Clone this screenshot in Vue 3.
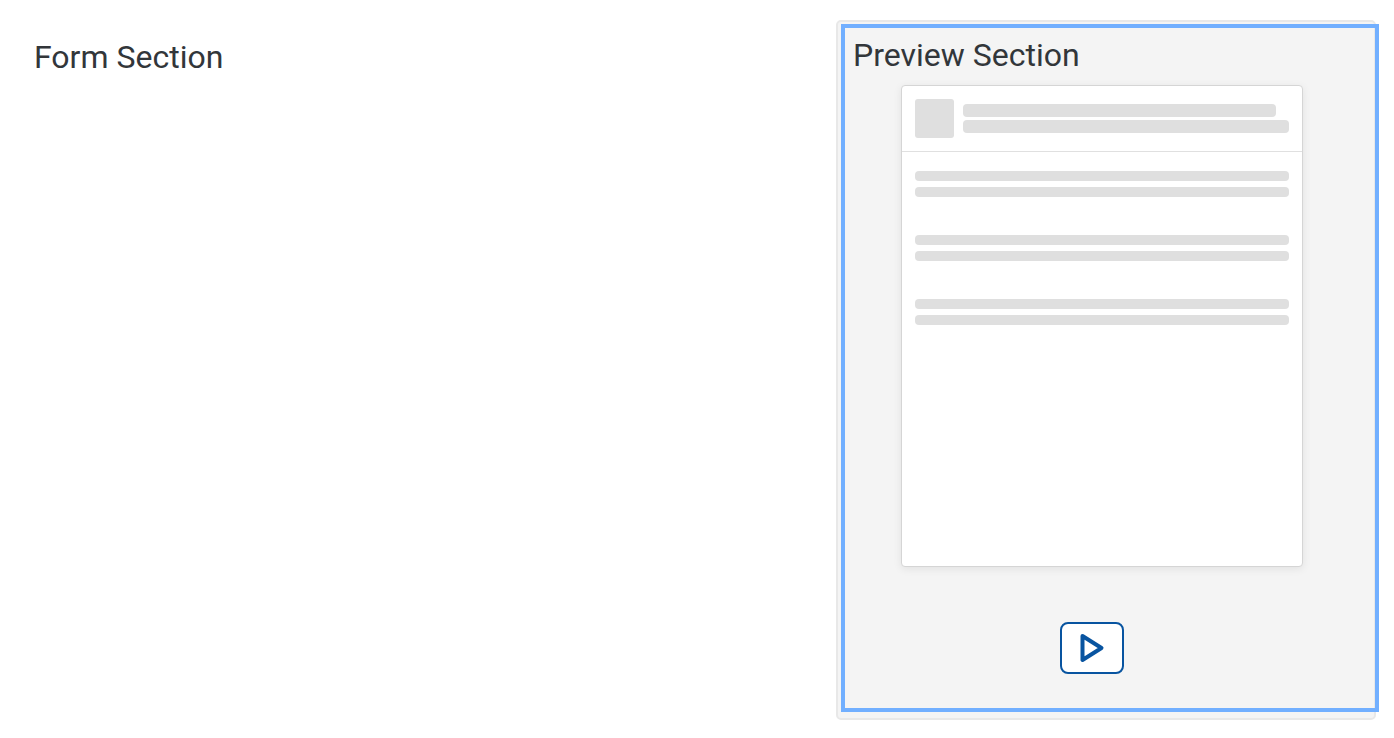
<script setup>
const groups = [1, 2, 3]
</script>

<template>
  <main class="page">
    <section class="form">
      <h2 class="title">Form Section</h2>
    </section>
    <section class="preview">
      <h2 class="title">Preview Section</h2>
      <div class="card">
        <div class="card-head">
          <span class="avatar"></span>
          <div class="head-lines">
            <span class="head-line short"></span>
            <span class="head-line"></span>
          </div>
        </div>
        <div class="card-body">
          <div v-for="g in groups" :key="g" class="group">
            <span class="line"></span>
            <span class="line"></span>
          </div>
        </div>
      </div>
      <button class="play" type="button" aria-label="Play">
        <svg width="28" height="32" viewBox="0 0 28 32" aria-hidden="true">
          <path d="M4.5 4 L23.5 16 L4.5 28 Z" fill="none" stroke="#0854a0" stroke-width="4" stroke-linejoin="round" />
        </svg>
      </button>
      <div class="focus-frame"></div>
    </section>
  </main>
</template>

<style>
body {
  background: #fff;
}
</style>

<style scoped>
.page {
  box-sizing: border-box;
  display: flex;
  align-items: stretch;
  padding: 20px 18px 18px 34px;
  font-family: Roboto, "Liberation Sans", sans-serif;
  color: #32363a;
}
.form {
  flex: 1;
  padding-top: 17px;
}
.title {
  margin: 0;
  font-size: 32px;
  line-height: 40px;
  font-weight: 400;
}
.preview {
  position: relative;
  box-sizing: border-box;
  flex: 0 1 540px;
  display: flex;
  flex-direction: column;
  padding: 13px 23px 44px 15px;
  background: #f4f4f4;
  border: 2px solid #e8e8e8;
  border-radius: 5px;
}
.focus-frame {
  position: absolute;
  inset: 2px -5px 6px 3px;
  border: 4px solid #71afff;
  pointer-events: none;
}
.card {
  box-sizing: border-box;
  align-self: center;
  width: 402px;
  max-width: 100%;
  min-height: 482px;
  margin-top: 10px;
  background: #fff;
  border: 1px solid #d5d5d5;
  border-radius: 4px;
  box-shadow: 0 2px 8px rgba(0, 0, 0, 0.08);
}
.card-head {
  display: flex;
  gap: 9px;
  padding: 13px;
  border-bottom: 1px solid #e0e0e0;
}
.avatar {
  width: 39px;
  height: 39px;
  border-radius: 3px;
  background: #dfdfdf;
}
.head-lines {
  flex: 1;
  display: flex;
  flex-direction: column;
  justify-content: center;
  gap: 3px;
}
.head-line {
  height: 13px;
  border-radius: 4px;
  background: #dfdfdf;
}
.short {
  width: 96%;
}
.card-body {
  display: flex;
  flex-direction: column;
  gap: 38px;
  padding: 19px 13px;
}
.group {
  display: flex;
  flex-direction: column;
  gap: 6px;
}
.line {
  height: 10px;
  border-radius: 4px;
  background: #dfdfdf;
}
.play {
  box-sizing: border-box;
  align-self: center;
  display: flex;
  align-items: center;
  justify-content: center;
  width: 64px;
  height: 52px;
  margin: 55px 20px 0 0;
  padding: 0;
  background: #fff;
  border: 2px solid #0854a0;
  border-radius: 8px;
  cursor: pointer;
}
</style>
